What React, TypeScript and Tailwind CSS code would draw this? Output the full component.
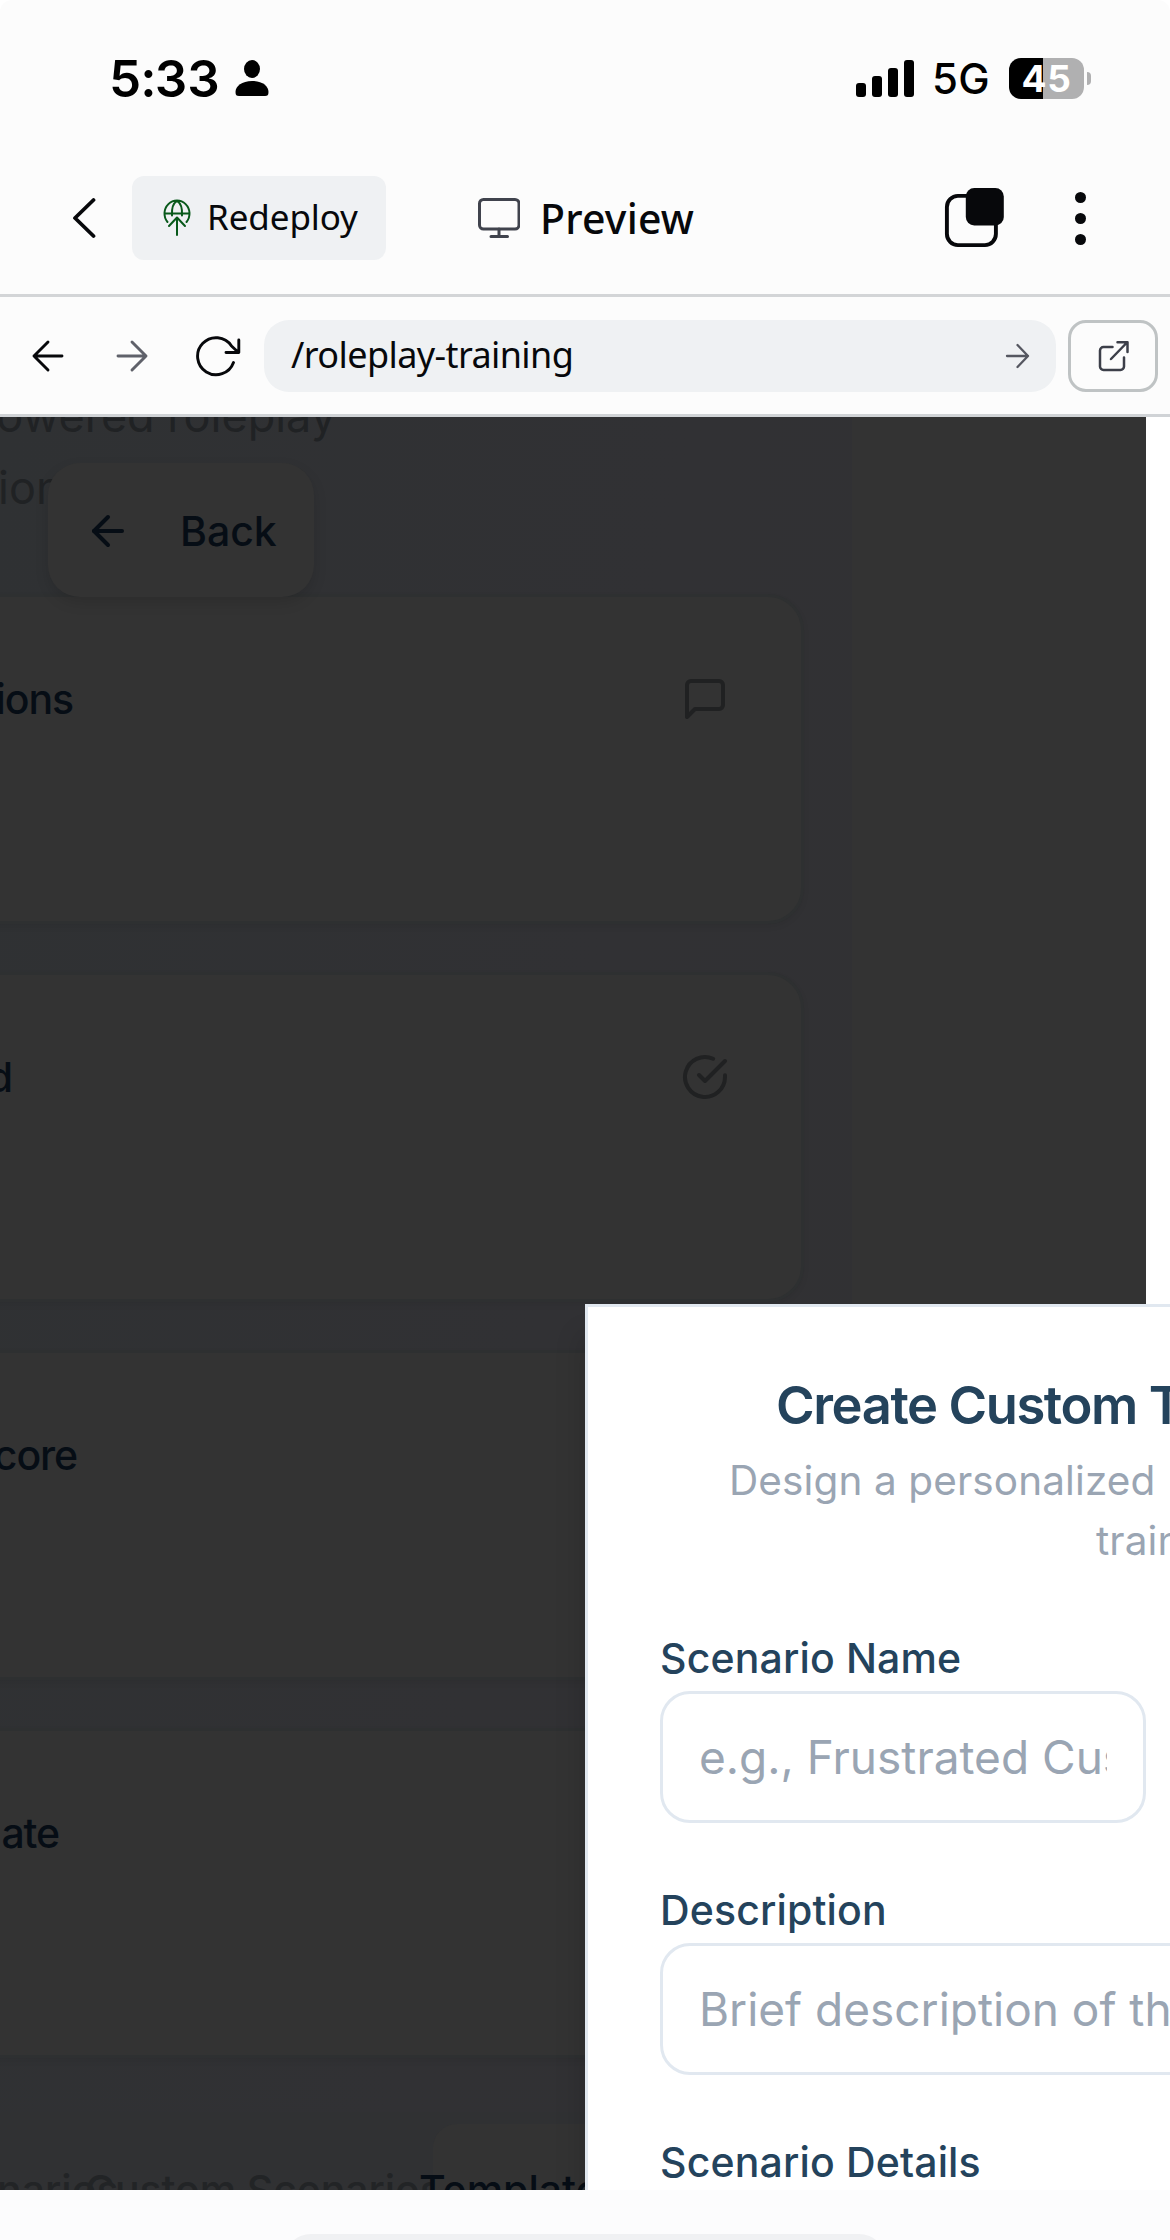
import type { ReactNode } from "react";
import { ArrowLeft } from "lucide-react";

function Stroke({
  w,
  h,
  sw,
  className,
  children,
}: {
  w: number;
  h: number;
  sw: number;
  className?: string;
  children: ReactNode;
}) {
  return (
    <svg
      width={w}
      height={h}
      viewBox={`0 0 ${w} ${h}`}
      fill="none"
      stroke="currentColor"
      strokeWidth={sw}
      strokeLinecap="round"
      strokeLinejoin="round"
      className={`shrink-0 ${className ?? ""}`}
    >
      {children}
    </svg>
  );
}

function StatusBar() {
  return (
    <div className="flex h-[156px] items-center pl-[109px] text-black">
      <span className="text-[51px] leading-none font-semibold tracking-[-0.4px] tabular-nums">5:33</span>
      <svg width="34" height="38" viewBox="0 0 34 38" className="ml-[15px] shrink-0" fill="currentColor">
        <ellipse cx="17" cy="10" rx="8" ry="9" />
        <path d="M0.5 33C0.5 27 7 22 17 22s16.500 5 16.500 11c0 3-1 4-3.500 4H4C1.500 37 .5 36 .5 33z" />
      </svg>
      <div className="ml-auto flex h-[37px] items-end gap-[6px]">
        <div className="h-[14px] w-[10px] rounded-[3px] bg-black" />
        <div className="h-[21px] w-[10px] rounded-[3px] bg-black" />
        <div className="h-[29px] w-[10px] rounded-[3px] bg-black" />
        <div className="h-[37px] w-[10px] rounded-[3px] bg-black" />
      </div>
      <span className="mt-[2px] ml-[18px] w-[57px] text-[42px] leading-none font-[450] tracking-[0.2px]">5G</span>
      <div className="ml-[20px] flex h-[41px] w-[75px] items-center justify-center overflow-hidden rounded-[12px] bg-[linear-gradient(90deg,#000_34px,#b0b0b1_34px)]">
        <span className="text-[37px] leading-none font-bold tracking-[0.6px] text-white">45</span>
      </div>
      <div className="mr-[79px] ml-[3px] h-[13px] w-[4px] rounded-r-[4px] bg-[#b0b0b1]" />
    </div>
  );
}

function AppHeader() {
  return (
    <div className="flex h-[141px] items-center border-b-[3px] border-[#d3d5d7] pb-[14px] pl-[72px] text-[#07080b]">
      <Stroke w={24} h={42} sw={3.8}>
        <path d="M21.500 3L3 21l18.500 18" />
      </Stroke>
      <div className="ml-[36px] flex h-[84px] w-[254px] items-center rounded-[12px] bg-[#eff1f3] pl-[31px]">
        <Stroke w={28} h={40} sw={2} className="text-[#08591a]">
          <path d="M4.500 24A12.500 13 0 1 1 23.500 24M1.500 15.500h25M14 3C10.500 5 8.500 10 9 17.500M14 3c3.500 2 5.500 7 5 14.500" />
          <path d="M14 37V20M6 28l8-8.500 8 8.500" />
        </Stroke>
        <span className="relative top-[-1.500px] ml-[16px] font-[Noto_Sans] text-[35px] leading-none tracking-[-0.1px]">Redeploy</span>
      </div>
      <Stroke w={44} h={42} sw={3} className="ml-[90px] text-[#40434d]">
        <rect x="3.500" y="2.500" width="39.500" height="29.500" rx="4" />
        <path d="M23 32v7M15 39.500h16.500" />
      </Stroke>
      <span className="ml-[20px] font-[Noto_Sans] text-[41px] leading-none font-medium tracking-[0.2px]">Preview</span>
      <svg width="62" height="62" viewBox="0 0 62 62" className="ml-auto shrink-0">
        <rect x="3.900" y="8.900" width="49" height="49.200" rx="11" fill="none" stroke="#07080b" strokeWidth="3.900" />
        <rect x="22.800" y="1" width="38" height="37.500" rx="8.500" fill="#07080b" />
      </svg>
      <div className="mr-[84.500px] ml-[70px] flex flex-col gap-[10px]">
        <span className="size-[11px] rounded-full bg-[#07080b]" />
        <span className="size-[11px] rounded-full bg-[#07080b]" />
        <span className="size-[11px] rounded-full bg-[#07080b]" />
      </div>
    </div>
  );
}

function UrlBar() {
  return (
    <div className="flex h-[120px] items-start border-b-[3px] border-[#d0d3d6] pt-[23px] pl-[30px]">
      <div className="flex h-[72px] items-center">
        <Stroke w={36} h={36} sw={2.9} className="text-[#07080b]">
          <path d="M32 18H4M18 4L4 18l14 14" />
        </Stroke>
        <Stroke w={36} h={36} sw={2.9} className="ml-[48px] text-[#5f616a]">
          <path d="M4 18h28M18 4l14 14-14 14" />
        </Stroke>
        <Stroke w={48} h={44} sw={2.9} className="ml-[43px] text-[#07080b]">
          <path d="M40.500 28.500A18.500 18.500 0 1 1 38.500 12L45.500 18.500M45.800 6v12.500H33" />
        </Stroke>
      </div>
      <div className="ml-[23px] flex h-[72px] w-[792px] items-center rounded-[25px] bg-[#eff1f3] pr-[26px] pl-[27px]">
        <span className="relative top-[-1px] font-[Noto_Sans] text-[36px] leading-none tracking-[-0.600px] text-[#07080b]">/roleplay-training</span>
        <Stroke w={26} h={28} sw={2.300} className="ml-auto text-[#555760]">
          <path d="M3 14h21M13.500 3L24 14 13.500 25" />
        </Stroke>
      </div>
      <div className="ml-[12px] flex h-[72px] w-[90px] items-center justify-center rounded-[18px] border-[3px] border-[#bfc3c4]">
        <Stroke w={32} h={32} sw={2.500} className="text-[#3c3f49]">
          <path d="M15.500 7H6.500a3.500 3.500 0 0 0-3.500 3.500v16a3.500 3.500 0 0 0 3.500 3.500h17a3.500 3.500 0 0 0 3.500-3.500V17.500M14 19L30 2.500M20.500 2.200H30.500V12" />
        </Stroke>
      </div>
    </div>
  );
}

function StatCard({ label, labelWidth, icon }: { label: string; labelWidth: string; icon?: ReactNode }) {
  return (
    <div className="-ml-10 flex h-[330px] w-[844px] items-start rounded-[36px] border-[3px] border-[#2e3031] bg-[#333333] pt-[78px] pr-[72px] pl-[37px] shadow-[0_3px_6px_rgba(0,0,0,0.06)]">
      <div
        className={`flex justify-end text-[41px] leading-[48px] font-medium tracking-[-1.100px] whitespace-nowrap text-[#060d15] ${labelWidth}`}
      >
        {label}
      </div>
      <div className="ml-auto text-[#202122]">{icon}</div>
    </div>
  );
}

const chatIcon = (
  <svg width="48" height="48" viewBox="0 0 24 24" fill="none" stroke="currentColor" strokeWidth="2" strokeLinecap="round" strokeLinejoin="round">
    <path d="M21 15a2 2 0 0 1-2 2H7l-4 4V5a2 2 0 0 1 2-2h14a2 2 0 0 1 2 2z" />
  </svg>
);

const checkIcon = (
  <svg width="48" height="48" viewBox="0 0 24 24" fill="none" stroke="currentColor" strokeWidth="2" strokeLinecap="round" strokeLinejoin="round">
    <path d="M22 11.080V12a10 10 0 1 1-5.930-9.140" />
    <path d="m9 11 3 3L22 4" />
  </svg>
);

function DimmedPage() {
  return (
    <div className="h-full w-[1146px] bg-[#333333]">
      <div className="h-full w-[852px] overflow-hidden bg-[linear-gradient(100deg,#2f3133_0%,#313134_60%,#313133_100%)]">
        <div className="-mt-[37px] text-[45px] leading-[72px] whitespace-nowrap text-[#202224]">
          <div className="flex w-[336px] justify-end">AI-powered roleplay</div>
          <div className="-ml-[2px]">ion</div>
        </div>
        <div className="mt-[70px] flex flex-col gap-[48px]">
          <StatCard label="ions" labelWidth="w-[73px]" icon={chatIcon} />
          <StatCard label="d" labelWidth="w-[12px]" icon={checkIcon} />
          <StatCard label="core" labelWidth="w-[77px]" />
          <StatCard label="ate" labelWidth="w-[59px]" />
        </div>
        <div className="mt-[54px] flex h-[156px] bg-[#303133] py-[12px] text-[41px] leading-[132px] font-medium whitespace-nowrap text-[#222426]">
          <div className="w-[85px]">
            <span className="-ml-[3px]">narios</span>
          </div>
          <div className="w-[348px] tracking-[-0.100px]">Custom Scenarios</div>
          <div className="w-[300px] rounded-[24px] bg-[#333333] text-[#060d15]">
            <span className="-ml-[14px]">Templates</span>
          </div>
        </div>
      </div>
    </div>
  );
}

function BackButton() {
  return (
    <div className="absolute top-[46px] left-[48px] flex h-[134px] w-[266px] items-center rounded-[32px] bg-[#333333] pl-[36px] text-[#060d15] shadow-[0_6px_14px_rgba(0,0,0,0.12)]">
      <ArrowLeft size={48} strokeWidth={2} className="relative top-px" />
      <span className="relative top-px ml-[48px] text-[41px] leading-none font-medium">Back</span>
    </div>
  );
}

function Field({ label, placeholder, width }: { label: string; placeholder: string; width: string }) {
  return (
    <div className="flex flex-col gap-[12px]">
      <label className="text-[41px] leading-[42px] font-medium tracking-[0.150px] text-[#24435c]">{label}</label>
      <div className={`h-[132px] rounded-[30px] border-[3px] border-[#e1e8f0] bg-white px-[36px] ${width}`}>
        <div className="overflow-hidden text-[46px] leading-[127px] whitespace-nowrap text-[#9aa5b3]">{placeholder}</div>
      </div>
    </div>
  );
}

function ScenarioDialog() {
  return (
    <div className="absolute top-[887px] left-[585px] h-[1400px] w-[1200px] border-[3px] border-[#e1e8f0] bg-white pt-[71px] pl-[72px] shadow-[-6px_30px_24px_rgba(0,0,0,0.12)]">
      <h2 className="pl-[116px] text-[52.500px] leading-[54px] font-semibold tracking-[-1.420px] whitespace-nowrap text-[#24435c]">
        Create Custom Training Scenario
      </h2>
      <p className="mt-[19px] text-[40.500px] leading-[60px] tracking-[0.110px] whitespace-nowrap text-[#9aa5b3]">
        <span className="block pl-[69px]">Design a personalized</span>
        <span className="block pl-[436px]">training session</span>
      </p>
      <div className="mt-[66px] flex flex-col gap-[66px]">
        <Field label="Scenario Name" placeholder="e.g., Frustrated Customer" width="w-[486px]" />
        <Field label="Description" placeholder="Brief description of the scenario" width="w-[1050px]" />
        <Field label="Scenario Details" placeholder="" width="w-[1050px]" />
      </div>
    </div>
  );
}

export default function App() {
  return (
    <div className="flex h-[2240px] w-[1170px] flex-col overflow-hidden bg-white font-[Inter]">
      <div className="shrink-0 rounded-t-[12px] bg-[#fcfcfc]">
        <StatusBar />
        <AppHeader />
        <UrlBar />
      </div>
      <div className="relative h-[1773px] shrink-0 overflow-hidden bg-white">
        <DimmedPage />
        <BackButton />
        <ScenarioDialog />
      </div>
      <div className="flex h-[50px] shrink-0 items-start overflow-hidden bg-[#fcfcfd] pt-[44px] pl-[284px]">
        <div className="h-[90px] w-[602px] shrink-0 rounded-[27px] bg-[#f0f1f3]" />
      </div>
    </div>
  );
}
